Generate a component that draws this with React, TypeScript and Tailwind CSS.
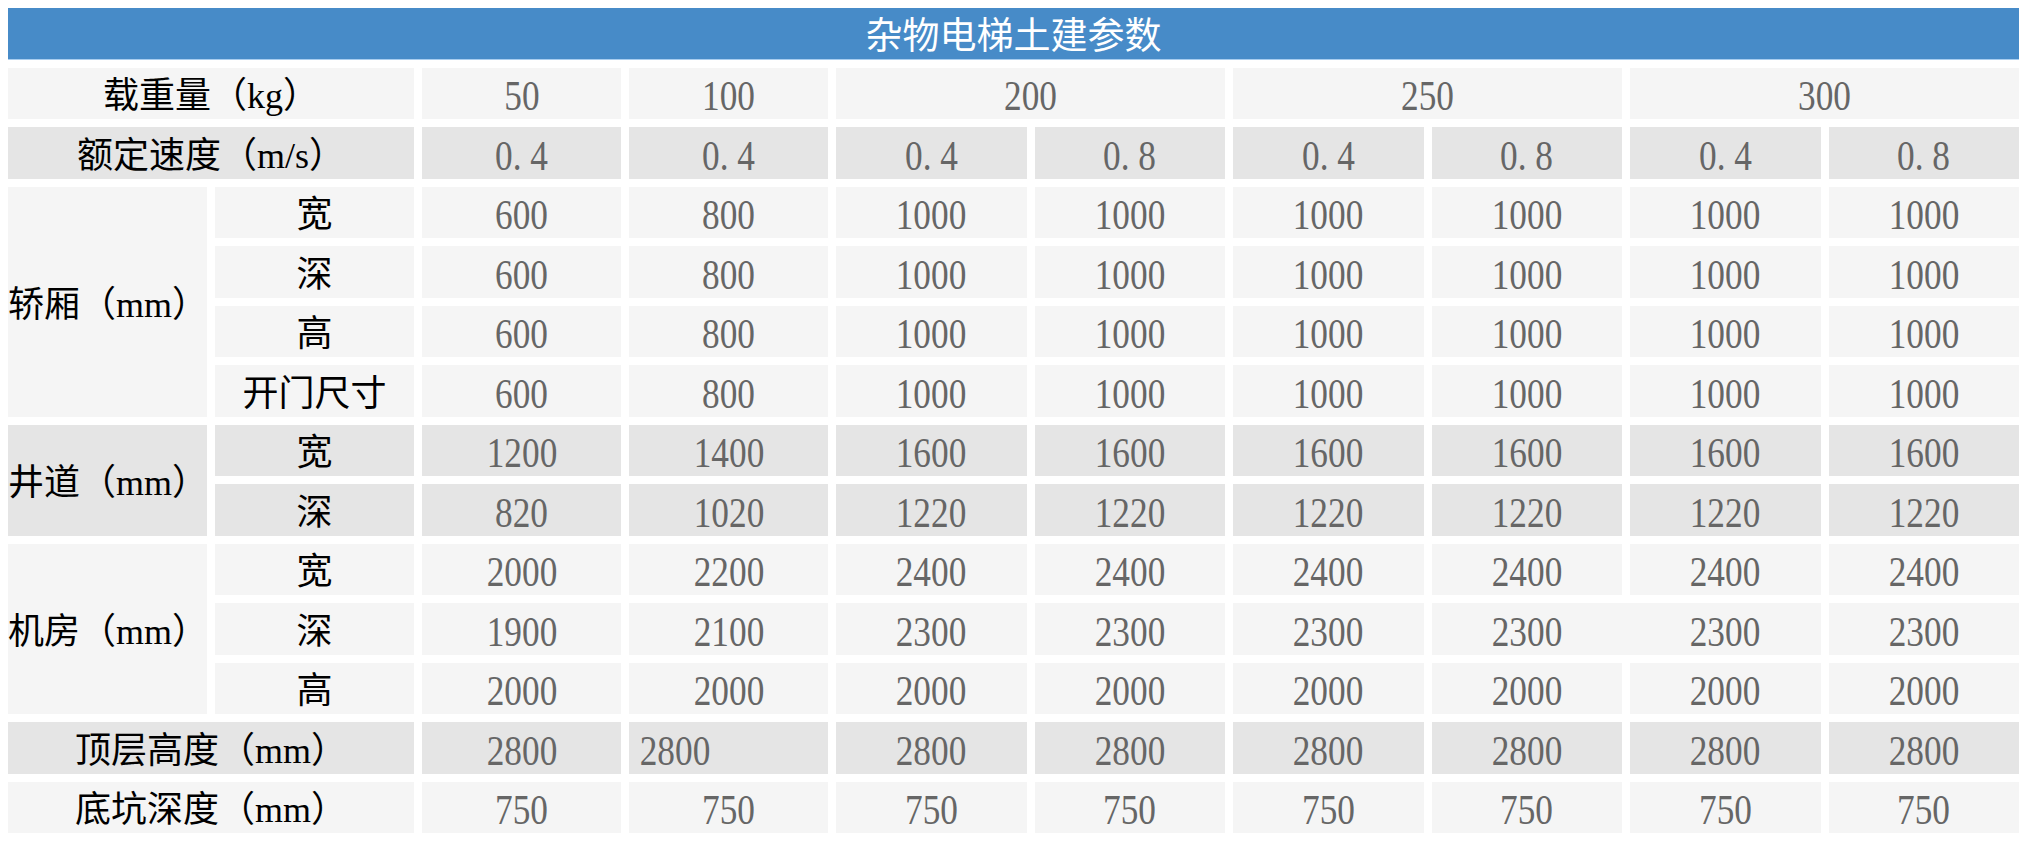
import React from "react";

const light = "bg-[#f5f5f5]";
const dark = "bg-[#e5e5e5]";

const labelFont = "inline-block translate-y-[3px] font-['Liberation_Serif','Noto_Sans_CJK_SC',serif] text-[36px] leading-none text-black";
const numFont = "inline-block translate-y-[3px] scale-x-[0.84] font-['Liberation_Serif','Noto_Sans_CJK_SC',serif] text-[42px] leading-none text-[#666]";

type Row = {
  group?: { label: string; span: number; dark: boolean };
  sub?: string;
  label?: string;
  values: string[];
  dark: boolean;
};

const rows: Row[] = [
  { group: { label: "轿厢（mm）", span: 4, dark: false }, sub: "宽", values: ["600", "800", "1000", "1000", "1000", "1000", "1000", "1000"], dark: false },
  { sub: "深", values: ["600", "800", "1000", "1000", "1000", "1000", "1000", "1000"], dark: false },
  { sub: "高", values: ["600", "800", "1000", "1000", "1000", "1000", "1000", "1000"], dark: false },
  { sub: "开门尺寸", values: ["600", "800", "1000", "1000", "1000", "1000", "1000", "1000"], dark: false },
  { group: { label: "井道（mm）", span: 2, dark: true }, sub: "宽", values: ["1200", "1400", "1600", "1600", "1600", "1600", "1600", "1600"], dark: true },
  { sub: "深", values: ["820", "1020", "1220", "1220", "1220", "1220", "1220", "1220"], dark: true },
  { group: { label: "机房（mm）", span: 3, dark: false }, sub: "宽", values: ["2000", "2200", "2400", "2400", "2400", "2400", "2400", "2400"], dark: false },
  { sub: "深", values: ["1900", "2100", "2300", "2300", "2300", "2300", "2300", "2300"], dark: false },
  { sub: "高", values: ["2000", "2000", "2000", "2000", "2000", "2000", "2000", "2000"], dark: false },
  { label: "顶层高度（mm）", values: ["2800", "2800", "2800", "2800", "2800", "2800", "2800", "2800"], dark: true },
  { label: "底坑深度（mm）", values: ["750", "750", "750", "750", "750", "750", "750", "750"], dark: false },
];

const Num = ({ v }: { v: string }) => <span className={numFont}>{v}</span>;

export default function App() {
  return (
    <div className="w-[2027px] h-[841px] bg-white p-2">
      <div className="grid h-full grid-cols-[199px_199px_199px_199px_repeat(6,minmax(0,1fr))] grid-rows-[repeat(14,51.5px)] gap-2">
        {/* Title */}
        <div className="col-span-10 flex items-center justify-center bg-[#478bc8] border-b border-[#a8cdef]">
          <span className="font-['Noto_Sans_CJK_SC',sans-serif] text-[37px] leading-none text-white">杂物电梯土建参数</span>
        </div>

        {/* Load */}
        <div className={`col-span-2 flex items-center justify-center ${light}`}>
          <span className={labelFont}>载重量（kg）</span>
        </div>
        <div className={`flex items-center justify-center ${light}`}><Num v="50" /></div>
        <div className={`flex items-center justify-center ${light}`}><Num v="100" /></div>
        <div className={`col-span-2 flex items-center justify-center ${light}`}><Num v="200" /></div>
        <div className={`col-span-2 flex items-center justify-center ${light}`}><Num v="250" /></div>
        <div className={`col-span-2 flex items-center justify-center ${light}`}><Num v="300" /></div>

        {/* Speed */}
        <div className={`col-span-2 flex items-center justify-center ${dark}`}>
          <span className={labelFont}>额定速度（m/s）</span>
        </div>
        {["0. 4", "0. 4", "0. 4", "0. 8", "0. 4", "0. 8", "0. 4", "0. 8"].map((v, i) => (
          <div key={i} className={`flex items-center justify-center ${dark}`}><Num v={v} /></div>
        ))}

        {rows.map((r, ri) => {
          const bg = r.dark ? dark : light;
          const cells: React.ReactNode[] = [];
          if (r.group) {
            cells.push(
              <div
                key="g"
                className={`flex items-center justify-center ${r.group.dark ? dark : light} ${
                  r.group.span === 4 ? "row-span-4" : r.group.span === 3 ? "row-span-3" : "row-span-2"
                }`}
              >
                <span className={labelFont}>{r.group.label}</span>
              </div>
            );
          }
          if (r.sub) {
            cells.push(
              <div key="s" className={`flex items-center justify-center ${bg}`}>
                <span className={labelFont}>{r.sub}</span>
              </div>
            );
          }
          if (r.label) {
            cells.push(
              <div key="l" className={`col-span-2 flex items-center justify-center ${bg}`}>
                <span className={labelFont}>{r.label}</span>
              </div>
            );
          }
          const merged = ri === 7;
          r.values.forEach((v, i) => {
            if (merged && i === 5) {
              cells.push(
                <div key={i} className={`col-span-2 flex ${bg}`}>
                  <div className="flex flex-1 items-center justify-center"><Num v={v} /></div>
                  <div className="w-2" />
                  <div className="flex flex-1 items-center justify-center"><Num v={r.values[6]} /></div>
                </div>
              );
              return;
            }
            if (merged && i === 6) return;
            const left = ri === 9 && i === 1;
            cells.push(
              <div key={i} className={`flex items-center ${left ? "justify-start pl-1" : "justify-center"} ${bg}`}>
                <Num v={v} />
              </div>
            );
          });
          return <React.Fragment key={ri}>{cells}</React.Fragment>;
        })}
      </div>
    </div>
  );
}
